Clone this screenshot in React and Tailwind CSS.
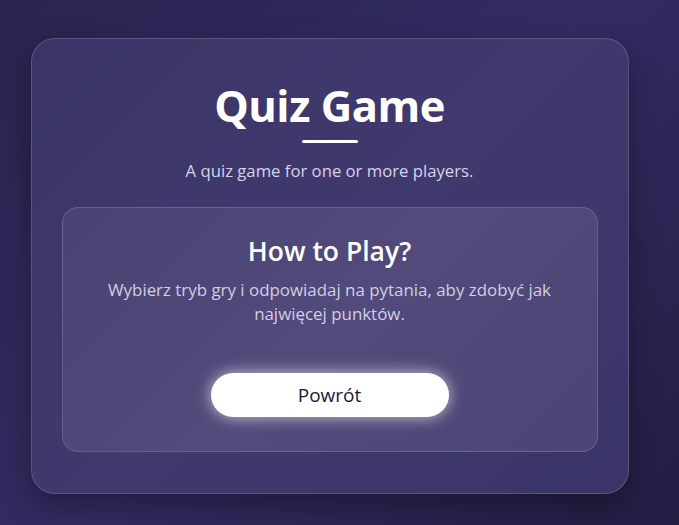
export default function App() {
  return (
    <div
      className="min-h-screen w-full flex items-center justify-center bg-[linear-gradient(135deg,#29244f_0%,#322c63_50%,#221e42_100%)]"
      style={{ fontFamily: '"Open Sans", "Noto Sans", sans-serif' }}
    >
      <div className="w-[598px] h-[456px] mt-[7px] mr-[20px] rounded-[24px] border border-white/15 bg-[linear-gradient(135deg,#3a3566_0%,#40396e_50%,#3a3568_100%)] shadow-[0_12px_30px_rgba(0,0,0,0.35)] px-[30px] pt-[41px] flex flex-col items-center">
        <h1 className="text-[43.5px] leading-[52px] font-bold text-white tracking-[-0.5px]">Quiz Game</h1>
        <div className="mt-[8px] w-[56px] h-[3px] rounded-full bg-white" />
        <p className="mt-[17px] text-[16.7px] leading-[22px] text-[#d6d3e6]">A quiz game for one or more players.</p>
        <div className="mt-[25px] w-full h-[245px] rounded-[16px] border border-white/15 bg-[linear-gradient(135deg,#494273_0%,#514a7b_50%,#4b4575_100%)] px-[30px] pt-[26px] flex flex-col items-center">
          <h2 className="text-[26.5px] leading-[34px] font-semibold text-white">How to Play?</h2>
          <p className="mt-[10px] text-[16.9px] leading-[24px] text-[#d2cfe2] text-center">
            Wybierz tryb gry i odpowiadaj na pytania, aby zdobyć jak<br />najwięcej punktów.
          </p>
          <button className="mt-[47px] w-[238px] h-[44px] rounded-full bg-white text-[#1a1838] text-[19px] shadow-[0_0_16px_rgba(255,255,255,0.7)]">
            Powrót
          </button>
        </div>
      </div>
    </div>
  );
}
